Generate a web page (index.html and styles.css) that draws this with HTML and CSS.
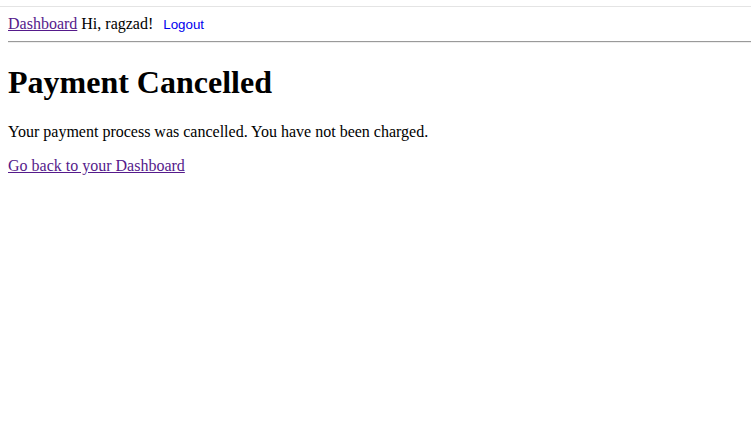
FILE: index.html
```html
<!DOCTYPE html>
<html>
<head>
<meta charset="utf-8">
<title>Payment Cancelled</title>
<link rel="stylesheet" href="styles.css">
</head>
<body>
<header class="site-header">
  <nav class="nav">
    <a href="#" class="nav-link">Dashboard</a> <span class="greeting">Hi, ragzad!</span>
    <form class="logout-form"><button type="button" class="logout-btn">Logout</button></form>
  </nav>
  <hr class="divider">
</header>
<main class="content">
  <h1 class="title">Payment Cancelled</h1>
  <p class="message">Your payment process was cancelled. You have not been charged.</p>
  <p class="message"><a href="#" class="back-link">Go back to your Dashboard</a></p>
</main>
</body>
</html>
```
FILE: styles.css
```css
html, body {
  margin: 0;
  padding: 0;
  background: #fff;
}
body {
  font-family: "Liberation Serif", "Times New Roman", serif;
  font-size: 16px;
  color: #000;
}
.site-header {
  margin-top: 6px;
  border-top: 1px solid #e4e4e4;
  padding-top: 8px;
}
.nav {
  padding-left: 8px;
  line-height: 18px;
  height: 18px;
}
.nav-link, .back-link {
  color: #551a8b;
}
.logout-form {
  display: inline;
  margin: 0;
}
.logout-btn {
  font-family: "Liberation Sans", Arial, sans-serif;
  font-size: 13.333px;
  color: #0000ee;
  background: transparent;
  border: none;
  padding: 1px 6px;
  margin: 0;
  cursor: pointer;
}
.divider {
  margin: 8px 0 0 8px;
  border: none;
  border-top: 1px solid #9a9a9a;
  border-bottom: 1px solid #eeeeee;
  height: 0;
}
.content {
  padding: 0 8px;
}
.title {
  font-size: 32px;
  font-weight: bold;
  margin: 21.44px 0;
}
.message {
  margin: 16px 0;
}
```
